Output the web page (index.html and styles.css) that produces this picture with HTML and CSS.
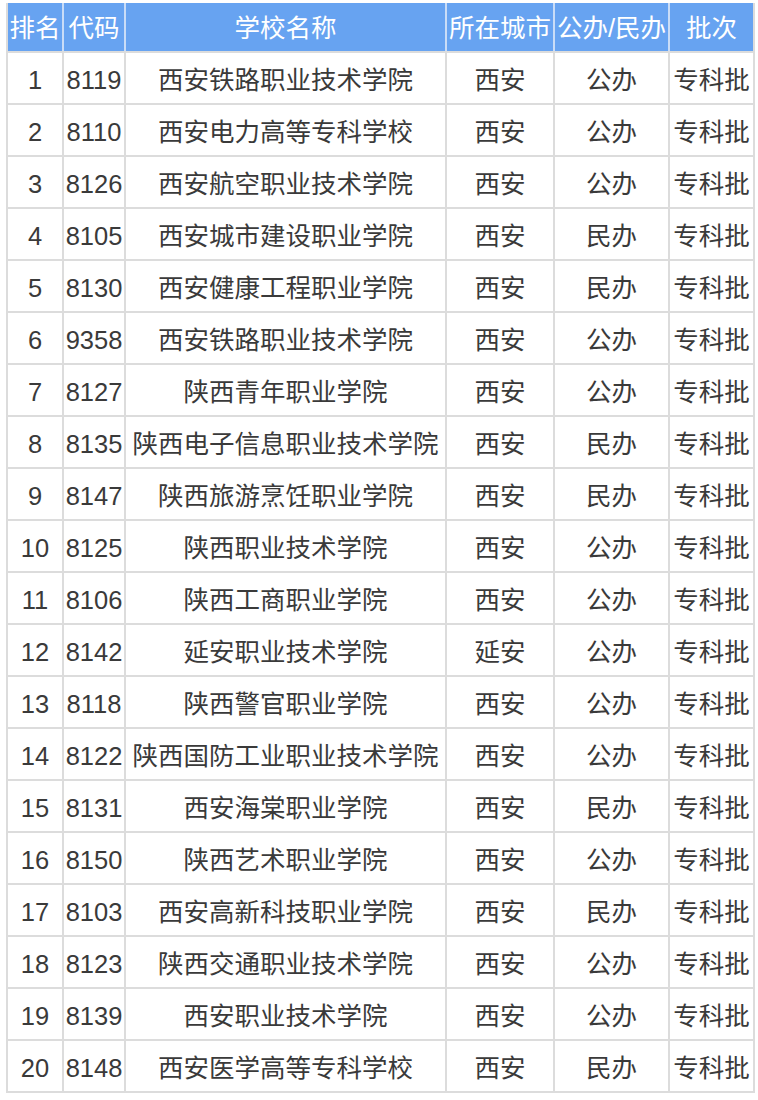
FILE: index.html
```html
<!DOCTYPE html>
<html lang="zh">
<head>
<meta charset="utf-8">
<link rel="stylesheet" href="styles.css">
</head>
<body>
<table class="tbl">
<colgroup>
<col class="c1"><col class="c2"><col class="c3"><col class="c4"><col class="c5"><col class="c6">
</colgroup>
<thead>
<tr><th>排名</th><th>代码</th><th>学校名称</th><th>所在城市</th><th>公办/民办</th><th>批次</th></tr>
</thead>
<tbody>
<tr><td>1</td><td>8119</td><td>西安铁路职业技术学院</td><td>西安</td><td>公办</td><td>专科批</td></tr>
<tr><td>2</td><td>8110</td><td>西安电力高等专科学校</td><td>西安</td><td>公办</td><td>专科批</td></tr>
<tr><td>3</td><td>8126</td><td>西安航空职业技术学院</td><td>西安</td><td>公办</td><td>专科批</td></tr>
<tr><td>4</td><td>8105</td><td>西安城市建设职业学院</td><td>西安</td><td>民办</td><td>专科批</td></tr>
<tr><td>5</td><td>8130</td><td>西安健康工程职业学院</td><td>西安</td><td>民办</td><td>专科批</td></tr>
<tr><td>6</td><td>9358</td><td>西安铁路职业技术学院</td><td>西安</td><td>公办</td><td>专科批</td></tr>
<tr><td>7</td><td>8127</td><td>陕西青年职业学院</td><td>西安</td><td>公办</td><td>专科批</td></tr>
<tr><td>8</td><td>8135</td><td>陕西电子信息职业技术学院</td><td>西安</td><td>民办</td><td>专科批</td></tr>
<tr><td>9</td><td>8147</td><td>陕西旅游烹饪职业学院</td><td>西安</td><td>民办</td><td>专科批</td></tr>
<tr><td>10</td><td>8125</td><td>陕西职业技术学院</td><td>西安</td><td>公办</td><td>专科批</td></tr>
<tr><td>11</td><td>8106</td><td>陕西工商职业学院</td><td>西安</td><td>公办</td><td>专科批</td></tr>
<tr><td>12</td><td>8142</td><td>延安职业技术学院</td><td>延安</td><td>公办</td><td>专科批</td></tr>
<tr><td>13</td><td>8118</td><td>陕西警官职业学院</td><td>西安</td><td>公办</td><td>专科批</td></tr>
<tr><td>14</td><td>8122</td><td>陕西国防工业职业技术学院</td><td>西安</td><td>公办</td><td>专科批</td></tr>
<tr><td>15</td><td>8131</td><td>西安海棠职业学院</td><td>西安</td><td>民办</td><td>专科批</td></tr>
<tr><td>16</td><td>8150</td><td>陕西艺术职业学院</td><td>西安</td><td>公办</td><td>专科批</td></tr>
<tr><td>17</td><td>8103</td><td>西安高新科技职业学院</td><td>西安</td><td>民办</td><td>专科批</td></tr>
<tr><td>18</td><td>8123</td><td>陕西交通职业技术学院</td><td>西安</td><td>公办</td><td>专科批</td></tr>
<tr><td>19</td><td>8139</td><td>西安职业技术学院</td><td>西安</td><td>公办</td><td>专科批</td></tr>
<tr><td>20</td><td>8148</td><td>西安医学高等专科学校</td><td>西安</td><td>民办</td><td>专科批</td></tr>
</tbody>
</table>
</body>
</html>
```
FILE: styles.css
```css
html, body {
  margin: 0;
  padding: 0;
  background: #ffffff;
}
body {
  padding: 3px 0 0 6px;
  font-family: "Liberation Sans", "Noto Sans CJK SC", sans-serif;
}
.tbl {
  border-collapse: collapse;
  table-layout: fixed;
  width: 747px;
}
.c1 { width: 56px; }
.c2 { width: 62px; }
.c3 { width: 321px; }
.c4 { width: 108px; }
.c5 { width: 115px; }
.c6 { width: 85px; }
.tbl th,
.tbl td {
  border: 2px solid #dcdcdc;
  padding: 0;
  text-align: center;
  vertical-align: middle;
  font-size: 25.5px;
  line-height: 30px;
  font-weight: 400;
  white-space: nowrap;
  overflow: visible;
}
.tbl th {
  background: #67a3f1;
  color: #ffffff;
  height: 47px;
  padding-top: 1px;
  border-top: 0;
  border-color: #c9dcf7;
  border-bottom-color: #dcdcdc;
}
.tbl th:first-child { border-left-color: #dcdcdc; }
.tbl th:last-child { border-right-color: #dcdcdc; }
.tbl td {
  color: #3a3a3a;
  height: 47px;
  padding-top: 3px;
}
```
